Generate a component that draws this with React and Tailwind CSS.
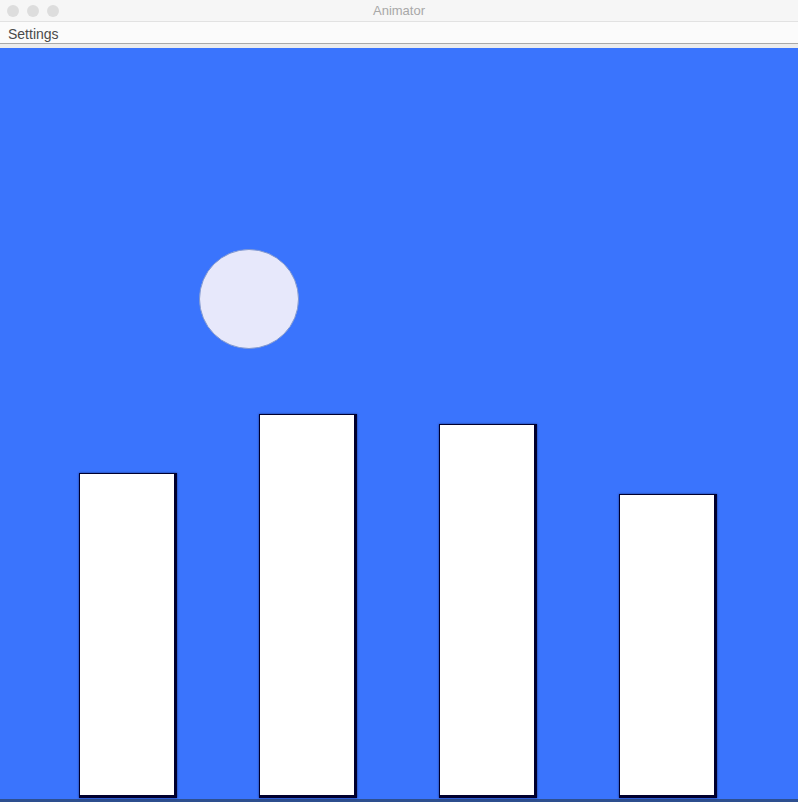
import React from 'react';

const bars = [
  { id: 1, h: 'h-[325px]' },
  { id: 2, h: 'h-[384px]' },
  { id: 3, h: 'h-[374px]' },
  { id: 4, h: 'h-[304px]' },
];

const Bar = ({ h }) => (
  <div className={`w-[98px] ${h} bg-[#00002e] pl-px pt-px pr-[3px] pb-[3px] shadow-[0_0_2px_rgba(0,0,40,0.6)]`}>
    <div className="w-full h-full bg-white" />
  </div>
);

export default function App() {
  return (
    <div className="w-[798px] h-[802px] flex flex-col bg-white font-['Helvetica','Liberation_Sans',sans-serif] overflow-hidden">
      {/* title bar */}
      <div className="relative h-[22px] flex items-center justify-center bg-[#f6f6f6] border-b border-[#e2e2e2]">
        <div className="absolute left-[7px] top-[5px] flex gap-2">
          <span className="w-3 h-3 rounded-full bg-[#dddddd]" />
          <span className="w-3 h-3 rounded-full bg-[#dddddd]" />
          <span className="w-3 h-3 rounded-full bg-[#dddddd]" />
        </div>
        <span className="text-[13px] text-[#a8a8a8] leading-none">Animator</span>
      </div>

      {/* menu bar */}
      <div className="h-[22px] flex items-center px-2 bg-[#fbfbfb] border-b border-[#a9a9a9]">
        <span className="text-[14px] text-[#4a4a4a] leading-none pt-[3px]">Settings</span>
      </div>
      <div className="h-[4px] bg-[#ececec]" />

      {/* canvas */}
      <div className="relative flex-1 bg-[#3a74fd] flex items-end gap-[82px] pl-[79px] pb-[1px]">
        <div className="absolute left-[199px] top-[201px] w-[100px] h-[100px] rounded-full bg-[#e7e8fb] border border-[#7f97d0]" />
        {bars.map((b) => (
          <Bar key={b.id} h={b.h} />
        ))}
      </div>
      <div className="h-[3px] bg-[#2d4f8f]" />
    </div>
  );
}
